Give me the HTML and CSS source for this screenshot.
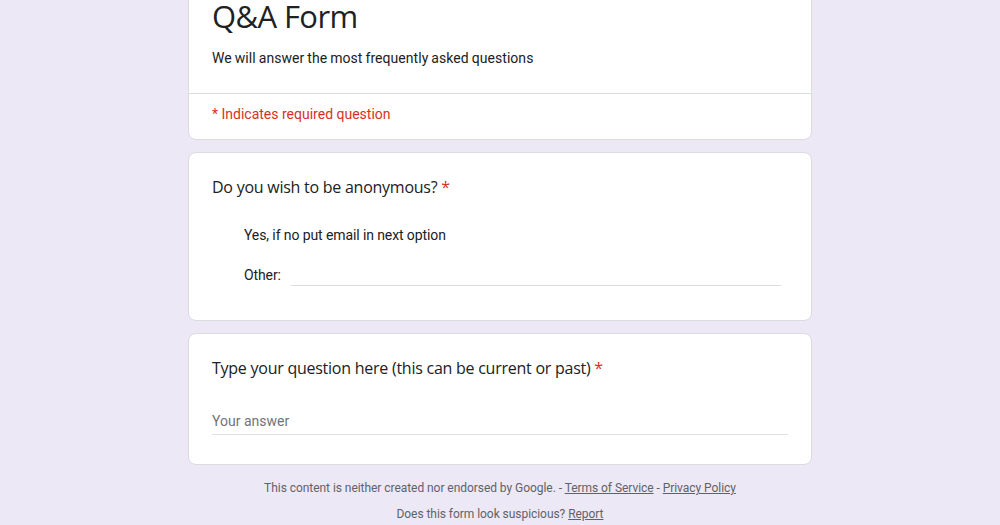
FILE: index.html
```html
<!DOCTYPE html>
<html>
<head>
<meta charset="utf-8">
<link rel="stylesheet" href="styles.css">
</head>
<body>
<main class="form">
  <section class="card header-card">
    <div class="header-main">
      <h1 class="title">Q&amp;A Form</h1>
      <p class="desc">We will answer the most frequently asked questions</p>
    </div>
    <div class="required-note">* Indicates required question</div>
  </section>

  <section class="card question">
    <div class="q-title">Do you wish to be anonymous? <span class="star">*</span></div>
    <div class="options">
      <div class="option">Yes, if no put email in next option</div>
      <div class="option other">Other: <span class="other-line"></span></div>
    </div>
  </section>

  <section class="card question">
    <div class="q-title">Type your question here (this can be current or past) <span class="star">*</span></div>
    <div class="answer">Your answer</div>
  </section>

  <footer class="footer">
    <div>This content is neither created nor endorsed by Google. - <a>Terms of Service</a> - <a>Privacy Policy</a></div>
    <div>Does this form look suspicious? <a>Report</a></div>
  </footer>
</main>
</body>
</html>
```

FILE: styles.css
```css
html, body {
  margin: 0;
  padding: 0;
  background: #ede8f6;
  height: 525px;
  overflow: hidden;
}
body {
  font-family: Roboto, "Liberation Sans", sans-serif;
  color: #202124;
}
.form {
  width: 624px;
  margin: -28px auto 0;
  display: flex;
  flex-direction: column;
  gap: 12px;
}
.card {
  background: #fff;
  border: 1px solid #dadce0;
  border-radius: 8px;
}
.header-main {
  padding: 23px 23px 25px;
  border-bottom: 1px solid #dadce0;
}
.title {
  margin: 0;
  font-family: "Open Sans", sans-serif;
  font-weight: 400;
  font-size: 31px;
  line-height: 40px;
  color: #202124;
  letter-spacing: -0.6px;
}
.desc {
  margin: 12px 0 0;
  font-size: 14px;
  line-height: 20px;
  letter-spacing: 0.05px;
  word-spacing: -0.5px;
}
.required-note {
  padding: 10px 23px 15px;
  font-size: 14px;
  line-height: 20px;
  color: #d93025;
}
.question {
  padding: 22px 23px 25px;
}
.q-title {
  font-family: "Open Sans", sans-serif;
  font-size: 16px;
  line-height: 24px;
  letter-spacing: -0.25px;
}
.star {
  color: #d93025;
}
.options {
  margin-top: 16px;
  padding-left: 32px;
}
.option {
  height: 40px;
  display: flex;
  align-items: center;
  font-size: 14px;
  letter-spacing: -0.1px;
}
.other-line {
  flex: 1;
  height: 20px;
  margin-left: 10px;
  margin-right: 7px;
  border-bottom: 1px solid #dadce0;
}
.answer {
  margin-top: 31px;
  margin-bottom: 4px;
  font-size: 14px;
  line-height: 20px;
  padding-bottom: 3px;
  color: #70757a;
  border-bottom: 1px solid #e0e0e0;
}
.footer {
  margin-top: -2px;
  text-align: center;
  font-size: 12px;
  line-height: 26px;
  color: #5f6368;
  letter-spacing: -0.05px;
}
.footer a {
  color: #5f6368;
  text-decoration: underline;
}
```
